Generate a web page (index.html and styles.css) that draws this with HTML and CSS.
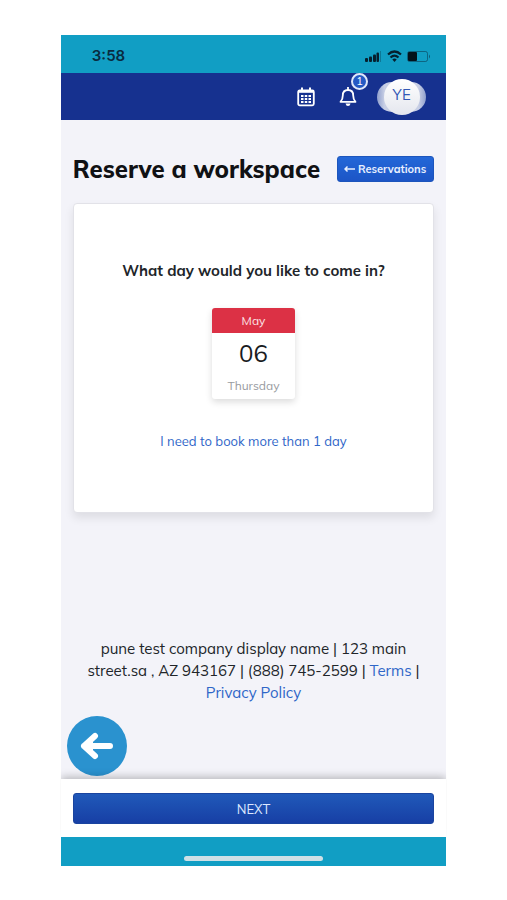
FILE: index.html
```html
<!DOCTYPE html>
<html lang="en">
<head>
<meta charset="utf-8">
<meta name="viewport" content="width=device-width, initial-scale=1">
<title>Reserve a workspace</title>
<link rel="stylesheet" href="styles.css">
</head>
<body>
<div class="phone">
  <div class="status">
    <span class="time">3:58</span>
    <svg class="status-icons" width="68" height="14" viewBox="0 0 68 14" aria-hidden="true">
      <g fill="#06202f">
        <rect x="1" y="9" width="3" height="4" rx="1"/>
        <rect x="5" y="7.500" width="3" height="5.500" rx="1"/>
        <rect x="9" y="5.500" width="3" height="7.500" rx="1"/>
        <rect x="12.500" y="3.500" width="2.500" height="9.500" rx="1"/>
        <rect x="16" y="2" width="1" height="11" opacity=".3"/>
      </g>
      <g fill="none" stroke="#06202f" stroke-width="2.200">
        <path d="M24 5.500Q30.500 -.500 37 5.500"/>
        <path d="M26.500 8.500Q30.500 4.800 34.500 8.500"/>
      </g>
      <path d="M28.300 10.500Q30.500 8.700 32.700 10.500L30.500 12.900Z" fill="#06202f"/>
      <rect x="43.500" y="2.500" width="20" height="10" rx="2" fill="none" stroke="#092b40" opacity=".5"/>
      <rect x="44" y="3" width="9" height="9" rx="1" fill="#03121b"/>
      <path d="M65 5.500Q67 7.500 65 9.500Z" fill="#092b40" opacity=".6"/>
    </svg>
  </div>
  <header class="nav">
    <button class="icon-btn" type="button" aria-label="Calendar">
      <svg width="18" height="20" viewBox="0 0 18 20" fill="none" stroke="#fff">
        <rect x="1.200" y="3.500" width="15.600" height="14.800" rx="1.500" stroke-width="1.800"/>
        <path d="M1 4.500H17" stroke-width="2.600"/>
        <path d="M5 .5V4M13 .5V4" stroke-width="2"/>
        <path d="M4 9H14M4 12H14M4 15H14" stroke-width="1.800" stroke-dasharray="2.500 1.250"/>
      </svg>
    </button>
    <button class="icon-btn bell" type="button" aria-label="Notifications">
      <svg width="18" height="20" viewBox="0 0 18 20" fill="none" stroke="#fff" stroke-width="1.800" stroke-linejoin="round">
        <path d="M9 .5V3" stroke-linecap="round"/>
        <path d="M1.500 14.800C3.500 12.700 3.800 11.500 3.800 8.500C3.800 5 6 3 9 3S14.200 5 14.200 8.500C14.200 11.500 14.500 12.700 16.500 14.800Z"/>
        <path d="M6.500 16.500H11.500Q11 19 9 19T6.500 16.500Z" fill="#fff" stroke="none"/>
      </svg>
      <span class="badge">1</span>
    </button>
    <button class="avatar" type="button"><span class="face">YE</span></button>
  </header>
  <main class="content">
    <div class="heading">
      <h1>Reserve a workspace</h1>
      <a class="reservations" href="#"><svg width="11" height="8" viewBox="0 0 11 8" fill="none" stroke="currentColor" stroke-width="1.500" aria-hidden="true"><path d="M1 4H11M3.500 1.500L1 4L3.500 6.500"/></svg>Reservations</a>
    </div>
    <section class="card">
      <h2>What day would you like to come in?</h2>
      <button class="date" type="button">
        <span class="month">May</span>
        <span class="day">06</span>
        <span class="weekday">Thursday</span>
      </button>
      <a class="more" href="#">I need to book more than 1 day</a>
    </section>
    <footer class="legal">pune test company display name | 123 main street.sa , AZ 943167 | (888) 745-2599 | <a href="#">Terms</a> | <a href="#">Privacy Policy</a></footer>
    <button class="back" type="button" aria-label="Back">
      <svg width="34" height="28" viewBox="0 0 34 28" fill="none" stroke="#fff" stroke-width="6" stroke-linecap="round" stroke-linejoin="round" aria-hidden="true"><path d="M4 14H30M15 4L4 14L15 24"/><path d="M5 14L13 8V20Z" fill="#fff" stroke="none"/></svg>
    </button>
  </main>
  <div class="actions"><button class="next" type="button">NEXT</button></div>
  <div class="home"><span class="home-bar"></span></div>
</div>
</body>
</html>
```
FILE: styles.css
```css
* { box-sizing: border-box; }

body {
  margin: 0;
  background: #fff;
  color: #212529;
  font-family: Mulish, Muli, "Noto Sans", sans-serif;
  font-size: 15px;
}

button { border: 0; padding: 0; font: inherit; cursor: pointer; }
a { color: #2f66c8; text-decoration: none; }

.phone {
  display: flex;
  flex-direction: column;
  min-height: calc(100vh - 69px);
  margin: 35px 12% 34px;
  background: #f3f3f9;
}

.status {
  display: flex;
  align-items: center;
  justify-content: space-between;
  height: 38px;
  padding: 4px 14px 0 31px;
  background: #119ec4;
}
.time {
  color: #092b40;
  font: 600 15px/20px Inter, sans-serif;
}

.nav {
  display: flex;
  align-items: center;
  justify-content: flex-end;
  height: 47px;
  padding-right: 20px;
  background: #16318f;
}
.icon-btn {
  position: relative;
  display: flex;
  margin-right: 24px;
  background: none;
}
.bell { margin-right: 20px; }
.badge {
  position: absolute;
  top: -14px;
  right: -11px;
  width: 17px;
  height: 17px;
  border: 2px solid #dfe8fa;
  border-radius: 50%;
  background: #2459c4;
  color: #fff;
  font-size: 11px;
  line-height: 13px;
}
.avatar {
  display: flex;
  justify-content: center;
  align-items: center;
  width: 49px;
  height: 30px;
  border-radius: 15px;
  background: linear-gradient(90deg, #8f9fcd, #c8cfe5 15%, #c8cfe5 85%, #8f9fcd);
}
.face {
  flex: none;
  width: 36px;
  height: 36px;
  border-radius: 50%;
  background: linear-gradient(#fff, #e4e6ee);
  color: #3158b5;
  font-size: 15px;
  line-height: 32px;
}

.content {
  position: relative;
  flex: 1;
  padding: 34px 12px 52px;
}
.heading {
  display: flex;
  align-items: center;
  justify-content: space-between;
  height: 30px;
  margin-bottom: 19px;
}
h1 {
  margin: 0;
  color: #101114;
  font-size: 24px;
  font-weight: 800;
  line-height: 30px;
  white-space: nowrap;
}
.reservations {
  display: flex;
  align-items: center;
  gap: 3px;
  height: 26px;
  padding: 0 7px 0 6px;
  border: 1px solid #1c55bd;
  border-radius: 3px;
  background: linear-gradient(#2367d8, #1c55c6);
  color: #e8f0ff;
  font-size: 11px;
  font-weight: 700;
}

.card {
  display: flex;
  flex-direction: column;
  align-items: center;
  padding: 57px 12px 61px;
  border: 1px solid #e2e2e8;
  border-radius: 4px;
  background: #fff;
  box-shadow: 0 5px 10px rgba(0, 0, 0, .09);
}
h2 {
  margin: 0 0 27px;
  font-size: 15px;
  line-height: 20px;
}
.date {
  display: flex;
  flex-direction: column;
  width: 83px;
  margin-bottom: 32px;
  border-radius: 3px;
  overflow: hidden;
  background: #fff;
  box-shadow: 0 3px 7px rgba(0, 0, 0, .14);
}
.month {
  background: #dc3145;
  color: #fbe3e6;
  font-size: 12px;
  line-height: 25px;
}
.day {
  color: #191b1e;
  font-size: 24px;
  line-height: 40px;
}
.weekday {
  color: #999ca1;
  font-size: 12px;
  line-height: 26px;
}
.more { font-size: 13px; line-height: 20px; }

.legal {
  margin-top: 125px;
  text-align: center;
  line-height: 22px;
}
.back {
  position: absolute;
  left: 6px;
  bottom: 3px;
  display: flex;
  align-items: center;
  justify-content: center;
  width: 60px;
  height: 60px;
  border-radius: 50%;
  background: #2a92cf;
}

.actions {
  position: relative;
  padding: 14px 12px 13px;
  background: #fff;
  box-shadow: 0 -2px 8px rgba(0, 0, 0, .25);
  clip-path: inset(-12px 0 0);
}
.next {
  display: block;
  width: 100%;
  height: 31px;
  border: 1px solid #1a449f;
  border-radius: 3px;
  background: linear-gradient(#2059b9, #173fa5);
  color: #dce8ff;
  font-size: 13px;
}

.home {
  display: flex;
  justify-content: center;
  align-items: flex-end;
  height: 29px;
  padding-bottom: 5px;
  background: #119ec4;
}
.home-bar {
  width: 36%;
  height: 5px;
  border-radius: 3px;
  background: #cfe0e6;
}
```
